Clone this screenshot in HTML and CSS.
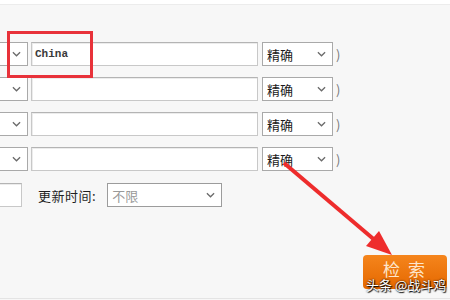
FILE: index.html
```html
<!DOCTYPE html>
<html lang="zh-CN">
<head>
  <meta charset="UTF-8" />
  <meta name="viewport" content="width=device-width, initial-scale=1.0"/>
  <title>高级搜索</title>
  <link rel="stylesheet" href="styles.css">
</head>
<body>
  <div class="page">
    <div class="topbar"></div>

    <!-- Search conditions -->
    <div class="form">
      <div class="row">
        <div class="select field-select"><span></span><svg class="chev" viewBox="0 0 10 6"><path d="M1 1l4 4 4-4"/></svg></div>
        <div class="text-input mono">China</div>
        <div class="select match"><span>精确</span><svg class="chev" viewBox="0 0 10 6"><path d="M1 1l4 4 4-4"/></svg></div>
        <span class="paren">)</span>
      </div>
      <div class="row">
        <div class="select field-select"><span></span><svg class="chev" viewBox="0 0 10 6"><path d="M1 1l4 4 4-4"/></svg></div>
        <div class="text-input"></div>
        <div class="select match"><span>精确</span><svg class="chev" viewBox="0 0 10 6"><path d="M1 1l4 4 4-4"/></svg></div>
        <span class="paren">)</span>
      </div>
      <div class="row">
        <div class="select field-select"><span></span><svg class="chev" viewBox="0 0 10 6"><path d="M1 1l4 4 4-4"/></svg></div>
        <div class="text-input"></div>
        <div class="select match"><span>精确</span><svg class="chev" viewBox="0 0 10 6"><path d="M1 1l4 4 4-4"/></svg></div>
        <span class="paren">)</span>
      </div>
      <div class="row">
        <div class="select field-select"><span></span><svg class="chev" viewBox="0 0 10 6"><path d="M1 1l4 4 4-4"/></svg></div>
        <div class="text-input"></div>
        <div class="select match"><span>精确</span><svg class="chev" viewBox="0 0 10 6"><path d="M1 1l4 4 4-4"/></svg></div>
        <span class="paren">)</span>
      </div>

      <div class="row time-row">
        <div class="text-input short"></div>
        <label class="label">更新时间:</label>
        <div class="select period"><span class="muted">不限</span><svg class="chev" viewBox="0 0 10 6"><path d="M1 1l4 4 4-4"/></svg></div>
      </div>

      <div class="actions">
        <button class="search-btn">检 索</button>
      </div>
    </div>

    <!-- Annotations over the screenshot -->
    <div class="highlight"></div>
    <svg class="arrow" viewBox="0 0 450 300" width="450" height="300">
      <line x1="284" y1="163" x2="377" y2="242" />
      <polygon points="392,255 366,246 379,231" />
    </svg>
    <div class="watermark">头条 @战斗鸡</div>
  </div>
</body>
</html>
```

FILE: styles.css
```css
html, body {
  margin: 0;
  padding: 0;
}
body {
  font-family: "Noto Sans CJK SC", "Noto Sans", sans-serif;
  font-size: 13px;
  color: #333;
  background: #f7f7f7;
  overflow: hidden;
}
.page {
  position: relative;
  width: 450px;
  height: 298px;
  border-bottom: 1px solid #e4e4e4;
  overflow: hidden;
}
.topbar {
  height: 4px;
  background: #fff;
  border-bottom: 1px solid #ececec;
}
.form {
  padding-top: 37px;
  display: flex;
  flex-direction: column;
  gap: 11px;
}
.row {
  display: flex;
  align-items: center;
  height: 24px;
}
.select {
  box-sizing: border-box;
  height: 24px;
  display: flex;
  align-items: center;
  justify-content: space-between;
  background: #fff;
  border: 1px solid #a9a9a9;
  padding: 0 6px 0 4px;
}
.chev {
  width: 9px;
  height: 6px;
  fill: none;
  stroke: #6a6a6a;
  stroke-width: 1.4;
}
.field-select {
  width: 60px;
  margin-left: -32px;
}
.text-input {
  box-sizing: border-box;
  height: 24px;
  width: 227px;
  margin-left: 3px;
  background: #fff;
  border: 1px solid #c8c8c8;
  border-top-color: #b4b4b4;
  box-shadow: inset 1px 1px 0 #ececec;
  padding: 0 3px;
  line-height: 22px;
}
.mono {
  font-family: "Liberation Mono", monospace;
  font-size: 11px;
  font-weight: bold;
  color: #3a3a3a;
}
.match {
  width: 71px;
  margin-left: 4px;
  color: #1a1a1a;
}
.paren {
  margin-left: 3px;
  color: #777;
}
.time-row {
  margin-top: 1px;
}
.text-input.short {
  width: 40px;
  margin-left: -18px;
}
.label {
  margin-left: 16px;
  color: #1f1f1f;
  letter-spacing: 0.5px;
}
.period {
  width: 115px;
  margin-left: 11px;
  border-color: #9c9c9c;
}
.muted {
  color: #999;
}
.actions {
  display: flex;
  justify-content: flex-end;
  padding-right: 3px;
  margin-top: 37px;
}
.search-btn {
  width: 84px;
  height: 34px;
  border: none;
  border-radius: 4px;
  background: linear-gradient(#f5851c, #e56800);
  color: #fde6cc;
  font-family: "Noto Sans CJK SC", sans-serif;
  font-size: 17px;
  letter-spacing: 2px;
  padding-bottom: 8px;
}
.highlight {
  position: absolute;
  left: 7px;
  top: 31px;
  width: 80px;
  height: 41px;
  border: 3px solid #e8323a;
}
.arrow {
  position: absolute;
  left: 0;
  top: 0;
  pointer-events: none;
}
.arrow line {
  stroke: #ee2c2c;
  stroke-width: 4;
}
.arrow polygon {
  fill: #ee2c2c;
}
.watermark {
  position: absolute;
  left: 366px;
  top: 275px;
  color: #fff;
  font-size: 13px;
  text-shadow: 0 0 2px #000, 1px 1px 1px #000;
}
```
